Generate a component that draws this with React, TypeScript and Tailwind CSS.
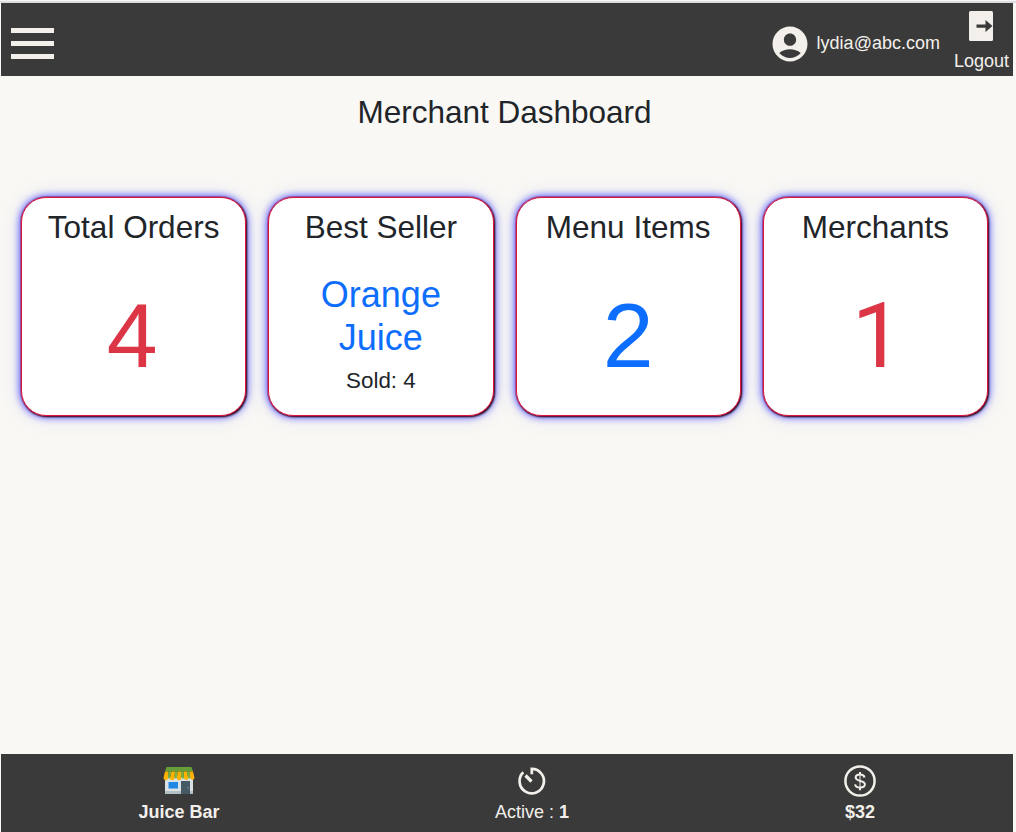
import type { ReactNode } from "react";
import { MdAccountCircle } from "react-icons/md";

function Card({ title, children }: { title: string; children: ReactNode }) {
  return (
    <section className="flex h-[219px] flex-col items-center rounded-[25px] border border-[#dc143c] bg-white pt-[10px] text-center shadow-[0_0_0_1px_rgba(170,10,60,0.4),1px_1px_2px_black,0_0_25px_rgba(0,0,255,0.1),0_0_8px_rgba(0,0,255,0.9)]">
      <h2 className="text-[31.500px] leading-[38px]">{title}</h2>
      {children}
    </section>
  );
}

function Figure({ value, className }: { value: number; className: string }) {
  return <p className={`leading-[108px] ${className}`}>{value}</p>;
}

function LogoutIcon() {
  return (
    <svg className="h-[30px] w-6" viewBox="0 0 24 30">
      <rect width="24" height="30" rx="1.5" fill="#f3f0eb" />
      <path d="M7.500 13.400h9V9l7 6-7 6v-4.200h-9z" fill="#3a3a3a" />
    </svg>
  );
}

function StoreIcon() {
  return (
    <svg className="h-8 w-8" viewBox="0 0 32 32">
      <path d="M2 12h28v15H2z" fill="#d9e1e5" />
      <path d="M2 26h16v3H2zM27 26h3v3h-3z" fill="#b4bfc5" />
      <path d="M18 16h9v13h-9z" fill="#455a64" />
      <path d="M5.500 17h9.500v6.500H5.500z" fill="#1e88e5" />
      <circle cx="25" cy="23" r=".7" fill="#90a4ae" />
      <path d="M3.500 2h25l1.500 4.500H2z" fill="#689f38" />
      <path d="M2 6.500h3.500L5 13.500a2.300 2.300 0 0 1-4.500-.5zM8.500 6.500H12l-.5 7a2.500 2.500 0 0 1-4.700 0zM14.500 6.500h3.300l.7 7a2.500 2.500 0 0 1-4.700 0zM20.500 6.500h3.300l1.700 7a2.500 2.500 0 0 1-4.500 0zM26.500 6.500H30l1.500 6.500a2.300 2.300 0 0 1-4.200.5z" fill="#ffb300" />
      <path d="M5.500 6.500h3l-1.700 7H5zM12 6.500h2.500l-.7 7h-2.300zM17.800 6.500h2.700l.5 7h-2.500zM23.800 6.500h2.700l.8 7h-1.800z" fill="#7cb342" />
    </svg>
  );
}

function TimerIcon() {
  return (
    <svg className="h-8 w-8" viewBox="0 0 32 32" fill="none" stroke="#f3f0eb" strokeWidth="2.700">
      <path d="M15.800 9.300V3.900A12.200 12.200 0 1 1 7.300 7.300" />
      <path d="M9.500 10.500l6 6" strokeWidth="3.200" />
    </svg>
  );
}

function DollarIcon() {
  return (
    <svg className="h-8 w-8" viewBox="0 0 32 32" fill="none" stroke="#f3f0eb">
      <circle cx="16" cy="16" r="14.600" strokeWidth="2.500" />
      <path d="M20.500 12.500c-.4-2-2.100-2.900-4.500-2.900-2.600 0-4.300 1.100-4.300 3 0 4.500 9.200 2.200 9.200 6.700 0 2.100-2 3.200-4.900 3.200-2.700 0-4.600-1.100-4.900-3.200M16 7v3M16 22.300v3" strokeWidth="2" />
      <path d="M16 9v14" strokeWidth="1" />
    </svg>
  );
}

export default function App() {
  return (
    <div className="flex h-[832px] w-[1016px] flex-col overflow-hidden bg-[#f9f8f4] pr-[3px] pl-px font-['Liberation_Sans',Arial,sans-serif] text-[#212529]">
      <div className="-mr-[3px] -ml-px h-[3px] shrink-0 border-b-2 border-[#dcdde0] bg-[#f4f5f5]" />
      <header className="flex h-[73px] shrink-0 items-center justify-between bg-[#3a3a3a] pl-[10px] text-[18px] leading-[22px] text-[#f3f0eb]">
        <button aria-label="Menu" className="mt-[7px] flex w-[43px] flex-col gap-2">
          <span className="h-[5px] bg-[#f3f0eb]" />
          <span className="h-[5px] bg-[#f3f0eb]" />
          <span className="h-[5px] bg-[#f3f0eb]" />
        </button>
        <div className="flex h-full">
          <div className="flex items-center pt-[8px]">
            <MdAccountCircle className="size-[42px]" />
            <span className="mb-[2px] ml-[6px]">lydia@abc.com</span>
          </div>
          <button className="mr-[4px] ml-[14px] flex flex-col items-center pt-[8px]">
            <LogoutIcon />
            <span className="mt-[9px]">Logout</span>
          </button>
        </div>
      </header>

      <main className="flex-1">
        <h1 className="mt-[17px] pr-[5px] text-center text-[31.500px] leading-[38px]">Merchant Dashboard</h1>
        <div className="mt-[66px] grid grid-cols-4 gap-[22px] pr-[25px] pl-[20px]">
          <Card title="Total Orders">
            <Figure value={4} className="mt-[35px] pr-[3px] text-[91.500px] text-[#dc3545]" />
          </Card>
          <Card title="Best Seller">
            <p className="mt-[27px] w-[140px] text-[36px] leading-[43px] text-[#0d6efd]">Orange Juice</p>
            <p className="mt-[8px] text-[22.400px] leading-[28px]">Sold: 4</p>
          </Card>
          <Card title="Menu Items">
            <Figure value={2} className="mt-[35px] text-[91.500px] text-[#0d6efd]" />
          </Card>
          <Card title="Merchants">
            <Figure value={1} className="mt-[36px] pl-[4px] font-['Roboto',sans-serif] text-[91.500px] text-[#dc3545]" />
          </Card>
        </div>
      </main>

      <footer className="grid h-[78px] shrink-0 grid-cols-[356px_350px_306px] bg-[#3a3a3a] text-[18px] leading-[22px] text-[#f3f0eb]">
        <div className="flex flex-col items-center pt-[11px]">
          <StoreIcon />
          <b className="mt-[4px]">Juice Bar</b>
        </div>
        <div className="flex flex-col items-center pt-[11px]">
          <TimerIcon />
          <span className="mt-[4px]">
            Active : <b>1</b>
          </span>
        </div>
        <div className="flex flex-col items-center pt-[11px]">
          <DollarIcon />
          <b className="mt-[4px]">$32</b>
        </div>
      </footer>
    </div>
  );
}
